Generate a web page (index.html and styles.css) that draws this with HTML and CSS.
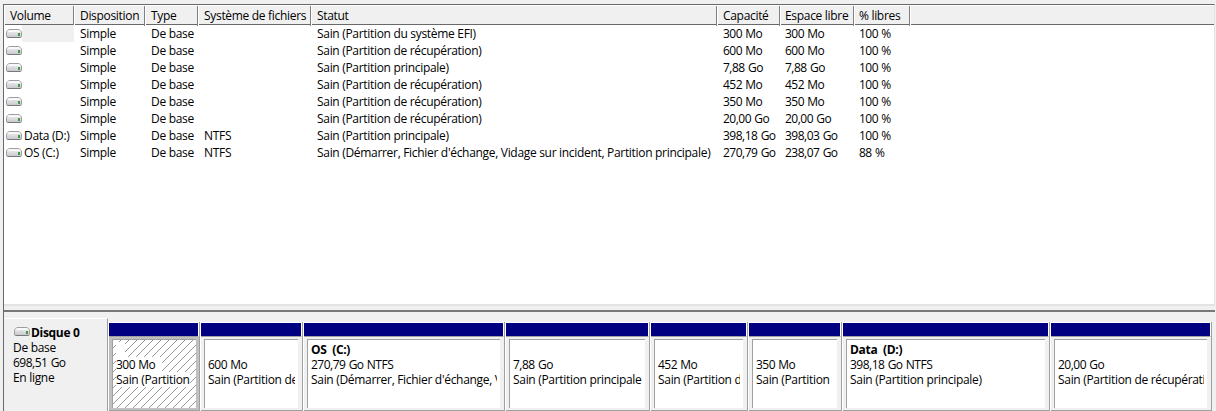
FILE: index.html
```html
<!DOCTYPE html>
<html lang="fr">
<head>
  <meta charset="UTF-8">
  <title>Gestion des disques</title>
  <link rel="stylesheet" href="styles.css">
</head>
<body>
  <svg class="symbols" aria-hidden="true">
    <linearGradient id="metal" x1="0" y1="0" x2="0" y2="1">
      <stop offset="0" stop-color="#f4f4f6"/>
      <stop offset="1" stop-color="#c6c6cc"/>
    </linearGradient>
    <symbol id="drive" viewBox="0 0 16 9">
      <path d="M.5 3.2C1.5 1.4 2.6.5 4 .5h8c1.400 0 2.500.9 3.500 2.700v4c0 .8-.5 1.300-1.300 1.300H1.800C1 8.500.5 8 .5 7.200z" fill="url(#metal)" stroke="#9c9ca1"/>
      <path d="M1.300 3C2 1.600 3 1 4 1h8c1 0 2 .6 2.700 2z" fill="#f8f8f8"/>
      <path d="M1.500 8.500h13" stroke="#77777c"/>
      <path d="M12 4h2v3h-2z" fill="#3f9a45"/>
    </symbol>
  </svg>

  <div class="window">
    <div class="volumes">
      <div class="row header">
        <span>Volume</span><span>Disposition</span><span>Type</span><span>Système de fichiers</span><span>Statut</span><span>Capacité</span><span>Espace libre</span><span>% libres</span><span></span>
      </div>
      <div id="volumeRows"></div>
    </div>
    <div class="splitter"></div>
    <div class="disk">
      <div class="disk-info">
        <div class="disk-name"><svg class="drive"><use href="#drive"/></svg><b>Disque 0</b></div>
        <div>De base</div>
        <div class="num">698,51 Go</div>
        <div>En ligne</div>
      </div>
      <div class="partitions" id="partitions"></div>
    </div>
  </div>

  <script>
    const volumes = [
      ["", "", "Sain (Partition du système EFI)", "300 Mo", "300 Mo", "100 %"],
      ["", "", "Sain (Partition de récupération)", "600 Mo", "600 Mo", "100 %"],
      ["", "", "Sain (Partition principale)", "7,88 Go", "7,88 Go", "100 %"],
      ["", "", "Sain (Partition de récupération)", "452 Mo", "452 Mo", "100 %"],
      ["", "", "Sain (Partition de récupération)", "350 Mo", "350 Mo", "100 %"],
      ["", "", "Sain (Partition de récupération)", "20,00 Go", "20,00 Go", "100 %"],
      ["Data (D:)", "NTFS", "Sain (Partition principale)", "398,18 Go", "398,03 Go", "100 %"],
      ["OS (C:)", "NTFS", "Sain (Démarrer, Fichier d'échange, Vidage sur incident, Partition principale)", "270,79 Go", "238,07 Go", "88 %"]
    ];

    // name, size, status, width
    const partitions = [
      ["&nbsp;&nbsp;", "300 Mo", "Sain (Partition", 92],
      ["", "600 Mo", "Sain (Partition de", 103],
      ["OS&nbsp; (C:)", "270,79 Go NTFS", "Sain (Démarrer, Fichier d'échange, V", 202],
      ["", "7,88 Go", "Sain (Partition principale", 145],
      ["", "452 Mo", "Sain (Partition d", 98],
      ["", "350 Mo", "Sain (Partition", 94],
      ["Data&nbsp; (D:)", "398,18 Go NTFS", "Sain (Partition principale)", 208],
      ["", "20,00 Go", "Sain (Partition de récupérati", 162]
    ];

    document.getElementById("volumeRows").innerHTML = volumes.map((v, i) => `
      <div class="row">
        <span class="name${i === 0 ? " selected" : ""}"><svg class="drive"><use href="#drive"/></svg><i>${v[0]}</i></span>
        <span>Simple</span><span>De base</span><span>${v[1]}</span><span>${v[2]}</span>
        <span class="num">${v[3]}</span><span class="num">${v[4]}</span><span class="num">${v[5]}</span>
      </div>`).join("");

    document.getElementById("partitions").innerHTML = partitions.map((p, i) => `
      <div class="partition${i === 0 ? " active" : ""}" style="width:${p[3]}px">
        <div class="bar"></div>
        <div class="body"><div class="box">
          <div class="title"><b>${p[0]}</b></div>
          <div class="num"><span>${p[1]}</span></div>
          <div><span>${p[2]}</span></div>
        </div></div>
      </div>`).join("");
  </script>
</body>
</html>
```
FILE: styles.css
```css
* {
  box-sizing: border-box;
}

body {
  margin: 0;
  height: 411px;
  overflow: hidden;
  background: #f0f0f0;
  color: #000;
  font-family: "Open Sans", "Noto Sans", sans-serif;
  font-size: 12px;
  letter-spacing: -0.31px;
  line-height: 15px;
  white-space: nowrap;
}

.symbols {
  position: absolute;
  width: 0;
  height: 0;
}

.window {
  margin: 4px 1px 0 3px;
  height: 407px;
  border-left: 1px solid #696969;
}

.volumes {
  height: 300px;
  background: #fff;
  border-top: 1px solid #696969;
  border-right: 1px solid #e3e3e3;
}

.row {
  display: grid;
  grid-template-columns: 70px 71px 53px 113px 406px 63px 74px 56px 1fr;
  height: 17px;
  line-height: 17px;
}

.row span {
  padding-left: 6px;
}

.row .num:nth-child(n+7) {
  padding-left: 5px;
}

.num {
  letter-spacing: -0.5px;
  word-spacing: 0.6px;
}

.header {
  height: 20px;
  line-height: 20px;
  background: #f0f0f0;
  border-top: 1px solid #fff;
  border-bottom: 1px solid #696969;
}

.header span {
  border-left: 1px solid #fff;
  border-right: 1px solid #808080;
  padding-left: 5px;
}

.header span:nth-child(n+7) {
  padding-left: 4px;
}

.header span:last-child {
  border-right: none;
}

.row .name {
  display: flex;
  align-items: center;
  padding-left: 2px;
}

.name i {
  flex: 1;
  height: 17px;
  padding-left: 2px;
  font-style: normal;
}

.selected i {
  background: #f0f0f0;
}

.drive {
  flex: none;
  width: 16px;
  height: 9px;
}

.splitter {
  height: 8px;
  border-top: 2px solid #e3e3e3;
  border-bottom: 2px solid #777;
  background: #f0f0f0;
}

.disk {
  display: flex;
  height: 99px;
  padding-top: 6px;
}

.disk-info {
  width: 104px;
  padding: 6px 0 0 9px;
  border-top: 1px solid #fff;
  border-right: 1px solid #a0a0a0;
}

.disk-name {
  display: flex;
}

.disk-name .drive {
  margin: 2px 1px 0 1px;
}

.partitions {
  display: flex;
  padding-top: 4px;
}

.partition {
  border-left: 1px solid #fff;
  border-right: 1px solid #a0a0a0;
}

.bar {
  height: 15px;
  background: #000080;
  border-top: 1px solid #fff;
  border-right: 1px solid #fff;
  border-bottom: 1px solid #a0a0a0;
}

.body {
  height: 74px;
  padding: 2px 4px 2px 3px;
  border-bottom: 1px solid #a0a0a0;
}

.box {
  height: 69px;
  padding: 2px 3px 0 3px;
  overflow: hidden;
  background: #fff;
  border-top: 1px solid #a0a0a0;
  border-left: 1px solid #a0a0a0;
}

.box div {
  height: 15px;
  overflow: hidden;
}

.active .body {
  padding-right: 3px;
  background: #c0c0c0;
}

.active .box {
  background: repeating-linear-gradient(135deg, #fff 0 4.96px, #999 4.96px 5.66px);
}

.active span,
.active b {
  display: inline-block;
  background: #fff;
}

.active b {
  width: 9px;
}

.active .num span {
  padding-right: 7px;
}
```
